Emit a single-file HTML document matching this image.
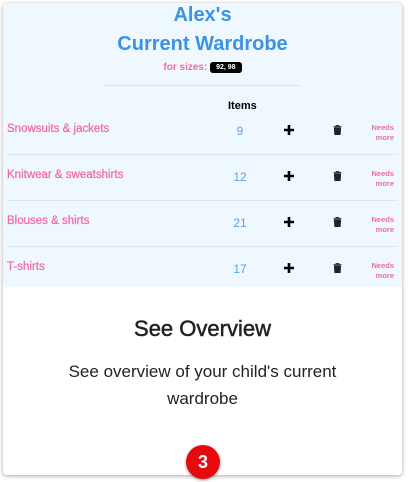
<!DOCTYPE html><html><head><style>
body{margin:0;width:408px;height:482px;background:#fff;font-family:"Liberation Sans",sans-serif;position:relative;overflow:hidden}
.card{position:absolute;left:3px;top:3px;width:399px;height:472px;background:#fff;border-radius:4px;box-shadow:0 1px 4px rgba(0,0,0,.35);overflow:hidden}
.top{position:absolute;left:0;top:0;width:399px;height:284px;background:#eff7ff}
.t{position:absolute;width:100%;text-align:center;color:#3a93e6;font-weight:bold;font-size:20px}
.pk{color:#f06aa8}
.row{position:absolute;left:4px;width:391px;height:46px}
.row .n{position:absolute;left:0;top:10px;font-size:11.5px;color:#f06aa8;-webkit-text-stroke:.25px #f06aa8}
.row .c{position:absolute;left:218px;top:11px;font-size:12px;color:#5fa0e6;width:30px;text-align:center}
.row .p{position:absolute;left:276px;top:11px}
.row .d{position:absolute;left:326px;top:12px}
.row .m{position:absolute;right:4px;top:10px;font-size:7.5px;font-weight:bold;color:#f06aa8;text-align:right;line-height:10px}
.sep{position:absolute;left:4px;width:391px;height:1px;background:#dde6ef}
</style></head><body><div class="card"><div class="top">
<div class="t" style="top:1px">Alex's</div>
<div class="t" style="top:30px">Current Wardrobe</div>
<div style="position:absolute;top:59px;width:100%;text-align:center;font-size:10px;font-weight:bold" class="pk">for sizes: <span style="background:#000;color:#fff;font-size:7px;padding:2px 6px;border-radius:3px;vertical-align:1px">92, 98</span></div>
<div style="position:absolute;left:101px;top:82px;width:197px;height:1px;background:#dde6ef"></div>
<div style="position:absolute;left:225px;top:97px;font-size:11px;font-weight:bold">Items</div>
<div class="row" style="top:110px"><span class="n">Snowsuits &amp; jackets</span><span class="c">9</span><svg class="p" width="12" height="12"><path d="M6 1V11M1 6H11" stroke="#000" stroke-width="2.6"/></svg><svg class="d" width="9" height="10"><path d="M0.5 1.5H8.5M3 1.5V0.5H6V1.5M1.3 2.7H7.7L7.2 10H1.8Z" fill="#222" stroke="#222" stroke-width="0.8"/></svg><span class="m">Needs<br>more</span></div>
<div class="sep" style="top:151px"></div>
<div class="row" style="top:156px"><span class="n">Knitwear &amp; sweatshirts</span><span class="c">12</span><svg class="p" width="12" height="12"><path d="M6 1V11M1 6H11" stroke="#000" stroke-width="2.6"/></svg><svg class="d" width="9" height="10"><path d="M0.5 1.5H8.5M3 1.5V0.5H6V1.5M1.3 2.7H7.7L7.2 10H1.8Z" fill="#222" stroke="#222" stroke-width="0.8"/></svg><span class="m">Needs<br>more</span></div>
<div class="sep" style="top:197px"></div>
<div class="row" style="top:202px"><span class="n">Blouses &amp; shirts</span><span class="c">21</span><svg class="p" width="12" height="12"><path d="M6 1V11M1 6H11" stroke="#000" stroke-width="2.6"/></svg><svg class="d" width="9" height="10"><path d="M0.5 1.5H8.5M3 1.5V0.5H6V1.5M1.3 2.7H7.7L7.2 10H1.8Z" fill="#222" stroke="#222" stroke-width="0.8"/></svg><span class="m">Needs<br>more</span></div>
<div class="sep" style="top:243px"></div>
<div class="row" style="top:248px"><span class="n">T-shirts</span><span class="c">17</span><svg class="p" width="12" height="12"><path d="M6 1V11M1 6H11" stroke="#000" stroke-width="2.6"/></svg><svg class="d" width="9" height="10"><path d="M0.5 1.5H8.5M3 1.5V0.5H6V1.5M1.3 2.7H7.7L7.2 10H1.8Z" fill="#222" stroke="#222" stroke-width="0.8"/></svg><span class="m">Needs<br>more</span></div>
</div>
<div style="position:absolute;top:313px;width:100%;text-align:center;font-size:22px;color:#222;-webkit-text-stroke:.5px #222">See Overview</div>
<div style="position:absolute;top:355px;left:40px;width:319px;text-align:center;font-size:17px;line-height:27px;color:#222">See overview of your child's current wardrobe</div>
</div>
<div style="position:absolute;left:186px;top:445px;width:34px;height:34px;border-radius:50%;background:#e8090f;color:#fff;font-weight:bold;font-size:18px;text-align:center;line-height:34px;box-shadow:0 1px 3px rgba(0,0,0,.4)">3</div>
</body></html>
